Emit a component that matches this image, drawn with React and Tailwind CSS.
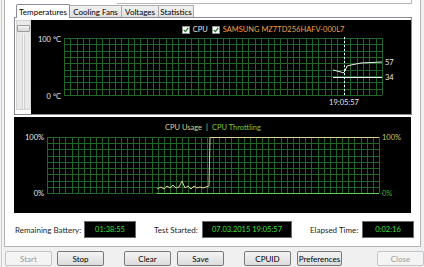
import React from 'react';

const GRID = '#22662a';

function Grid({ x, y, w, h, cols, rows }) {
  const lines = [];
  for (let i = 0; i <= cols; i++) {
    const xx = Math.round(x + (w * i) / cols) + 0.5;
    lines.push(<line key={'v' + i} x1={xx} y1={y} x2={xx} y2={y + h} stroke={GRID} strokeWidth="1" />);
  }
  for (let j = 0; j <= rows; j++) {
    const yy = Math.round(y + (h * j) / rows) + 0.5;
    lines.push(<line key={'h' + j} x1={x} y1={yy} x2={x + w} y2={yy} stroke={GRID} strokeWidth="1" />);
  }
  return <g>{lines}</g>;
}

function Check({ label, color }) {
  return (
    <div className="flex items-center gap-[3px]">
      <div className="w-[8px] h-[8px] bg-white border border-[#8f8f8f] flex items-center justify-center">
        <svg width="6" height="6" viewBox="0 0 6 6">
          <path d="M0.8 3 L2.4 4.6 L5.2 1" stroke="#2a7a2a" strokeWidth="1.3" fill="none" />
        </svg>
      </div>
      <span className={color}>{label}</span>
    </div>
  );
}

function TempChart() {
  return (
    <div className="flex-1 bg-black flex flex-col">
      <div className="h-[14px] flex items-end justify-center gap-[4px] pl-[84px] text-[7.5px]">
        <Check label="CPU" color="text-[#e6e6e6]" />
        <Check label="SAMSUNG MZ7TD256HAFV-000L7" color="text-[#f0a050]" />
      </div>
      <svg width="380" height="80" className="block">
        <Grid x={33} y={4} w={318} h={57} cols={50} rows={9} />
        <text x="30" y="8" textAnchor="end" fill="#e8e8e8" fontSize="7.5">100 °C</text>
        <text x="30" y="65" textAnchor="end" fill="#e8e8e8" fontSize="7.5">0 °C</text>
        <line x1="313.5" y1="3" x2="313.5" y2="62" stroke="#ffffff" strokeDasharray="2 2" />
        <path d="M302 36 L310 38 L312 39 L314 37 L316 32 L320 31 L330 29 L340 28.5 L351 28" stroke="#f0f0f0" fill="none" strokeWidth="1" />
        <line x1="302" y1="43.5" x2="351" y2="43.5" stroke="#f0f0f0" />
        <text x="354" y="31" fill="#e8e8e8" fontSize="7.5">57</text>
        <text x="354" y="46" fill="#e8e8e8" fontSize="7.5">34</text>
        <text x="313" y="71" textAnchor="middle" fill="#e8e8e8" fontSize="7.5">19:05:57</text>
      </svg>
    </div>
  );
}

function UsageChart() {
  const wiggle = [
    [143, 72], [147, 70], [150, 72], [153, 69], [156, 71], [159, 68], [162, 71], [165, 70],
    [168, 64], [171, 71], [174, 69], [177, 72], [180, 69], [183, 71], [186, 70], [189, 71],
    [192, 70], [195, 69],
  ];
  const d = 'M' + wiggle.map((p) => p.join(' ')).join(' L') + ' L196 20.5 L365 20.5';
  return (
    <svg width="397" height="96" className="block">
      <text x="188" y="13" textAnchor="end" fill="#d6d68c" fontSize="7.5">CPU Usage</text>
      <text x="193" y="13" textAnchor="middle" fill="#d6d68c" fontSize="7.5">|</text>
      <text x="198" y="13" fill="#7ccc3c" fontSize="7.5">CPU Throttling</text>
      <Grid x={33} y={20} w={332} h={56} cols={54} rows={9} />
      <text x="30" y="23" textAnchor="end" fill="#e8e8e8" fontSize="7.5">100%</text>
      <text x="30" y="79" textAnchor="end" fill="#e8e8e8" fontSize="7.5">0%</text>
      <text x="368" y="23" fill="#c8c860" fontSize="7.5">100%</text>
      <text x="368" y="79" fill="#3cb43c" fontSize="7.5">0%</text>
      <line x1="143" y1="76.5" x2="365" y2="76.5" stroke="#58d858" />
      <path d={d} stroke="#d8d890" fill="none" strokeWidth="1" />
    </svg>
  );
}

function Tab({ children, active, w }) {
  if (active) {
    return (
      <div className={`${w} h-[14px] -mb-px relative z-10 bg-white border border-b-0 border-[#898c95] rounded-t-[2px] flex items-center justify-center text-black`}>
        {children}
      </div>
    );
  }
  return (
    <div className={`${w} h-[12px] bg-gradient-to-b from-[#f2f2f2] to-[#e0e0e0] border border-b-0 border-l-0 border-[#acacac] flex items-center justify-center text-black`}>
      {children}
    </div>
  );
}

function InfoBox({ children, w }) {
  return (
    <div className={`${w} h-[17px] bg-black border border-[#6a6a6a] flex items-center justify-center text-[#3ce03c] text-[7.5px]`}>
      {children}
    </div>
  );
}

function Btn({ children, ml, w = 'w-[47px]', disabled }) {
  return (
    <div
      className={`${ml} ${w} h-[15px] rounded-[2px] border flex items-center justify-center ${
        disabled
          ? 'border-[#c2c5c8] bg-[#f4f4f4] text-[#9a9a9a]'
          : 'border-[#7a7a7a] bg-gradient-to-b from-[#f4f4f4] to-[#dcdcdc] text-black'
      }`}
    >
      {children}
    </div>
  );
}

export default function App() {
  return (
    <div className="w-[424px] h-[267px] bg-[#f0f0f0] flex overflow-hidden font-['Lato','Noto_Sans',sans-serif] text-[8px] leading-none whitespace-nowrap">
      <div className="w-[2px] bg-[#f4f4f4]" />
      <div className="w-px bg-[#bccfe2]" />
      <div className="w-[3px] bg-[#f4f4f4]" />
      <div className="flex flex-col">
        <div className="w-[417px] h-[247px] bg-white border-l border-r border-b border-[#b4b4b4] flex flex-col">
          {/* tab header */}
          <div className="h-[4px] flex">
            <div className="ml-[112px] w-[295px] h-full border-b border-r border-[#b8b8b8]" />
          </div>
          <div className="h-[13px] flex items-end pl-[11px]">
            <Tab active w="w-[54px]">Temperatures</Tab>
            <Tab w="w-[52px]">Cooling Fans</Tab>
            <Tab w="w-[37px]">Voltages</Tab>
            <Tab w="w-[35px]">Statistics</Tab>
          </div>
          {/* tab panel */}
          <div className="ml-[9px] w-[398px] h-[98px] border border-[#898c95] flex pt-[2px] pl-px">
            <div className="w-[15px] h-[90px] bg-[#e9e9e9] border border-[#d4d4d4] flex flex-col items-center pt-[4px]">
              <div className="w-[13px] h-[7px] rounded-[1px] bg-gradient-to-b from-[#f6f6f6] to-[#d6d6d6] border border-[#9c9c9c]" />
              <div className="mt-[2px] w-[3px] flex-1 bg-[#f7f7f7] border-x border-[#d0d0d0]" />
            </div>
            <TempChart />
          </div>
          {/* usage chart */}
          <div className="ml-[9px] mt-[2px] w-[397px] h-[96px] bg-black">
            <UsageChart />
          </div>
          {/* info row */}
          <div className="mt-[8px] flex items-center text-[#1e1e1e]">
            <span className="ml-[10px] w-[69px]">Remaining Battery:</span>
            <InfoBox w="w-[52px]">01:38:55</InfoBox>
            <span className="ml-[18px] w-[48px]">Test Started:</span>
            <InfoBox w="w-[90px]">07.03.2015 19:05:57</InfoBox>
            <span className="ml-[18px] w-[52px]">Elapsed Time:</span>
            <InfoBox w="w-[52px]">0:02:16</InfoBox>
          </div>
        </div>
        {/* buttons */}
        <div className="mt-[4px] flex">
          <Btn ml="ml-px" disabled>Start</Btn>
          <Btn ml="ml-[5px]">Stop</Btn>
          <Btn ml="ml-[20px]">Clear</Btn>
          <Btn ml="ml-[6px]">Save</Btn>
          <Btn ml="ml-[20px]">CPUID</Btn>
          <Btn ml="ml-[6px]" w="w-[45px]">Preferences</Btn>
          <Btn ml="ml-[35px]" disabled>Close</Btn>
        </div>
      </div>
    </div>
  );
}
